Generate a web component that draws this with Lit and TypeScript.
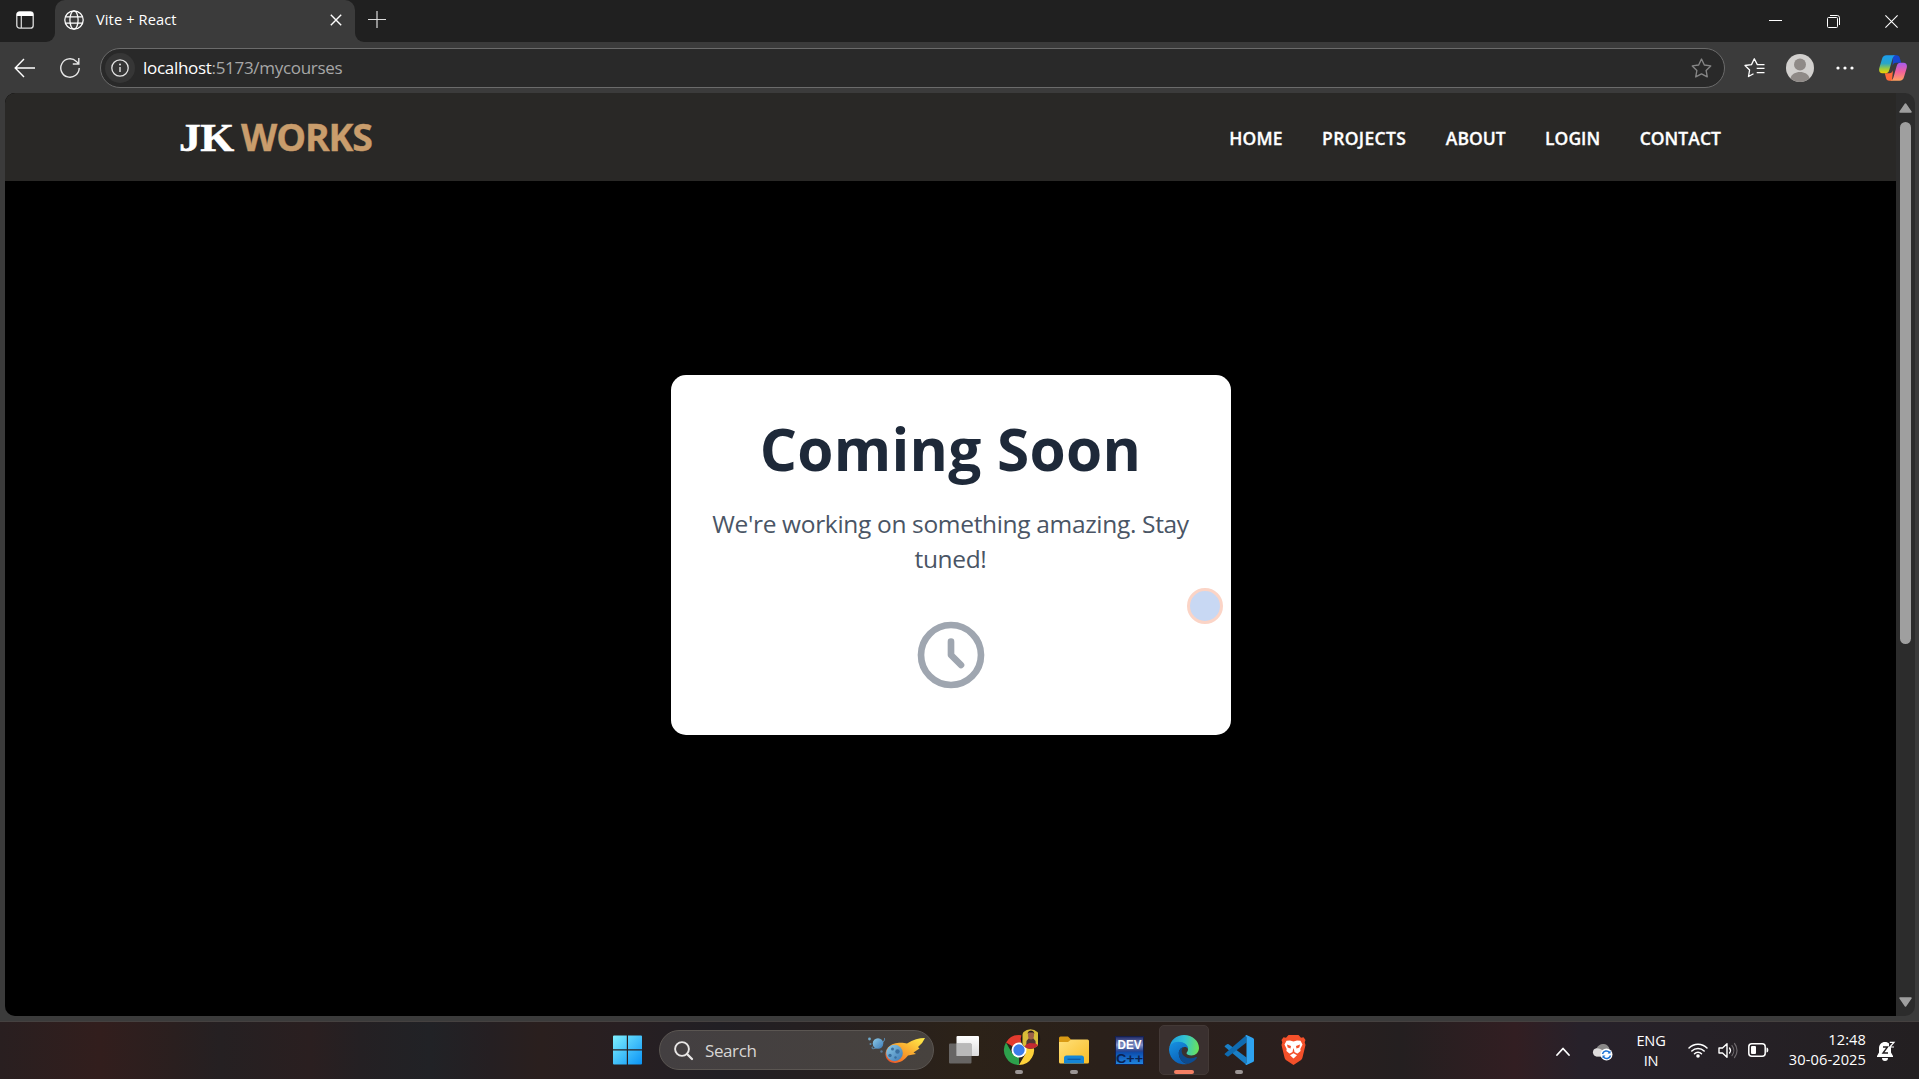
import { LitElement, html, css, svg } from "lit";
import { customElement } from "lit/decorators.js";

const icon = (w: number, h: number, body: unknown, box = `0 0 ${w} ${h}`) =>
  html`<svg width=${w} height=${h} viewBox=${box} fill="none">${body}</svg>`;

const STAR = "M10 1 12.7 6.6 18.8 7.5 14.4 11.8 15.5 18 10 15.1 4.5 18 5.6 11.8 1.2 7.5 7.3 6.6Z";

// Menu labels with their tracking in pixels.
const LINKS: [string, number][] = [["HOME", 0.1], ["PROJECTS", 0.37], ["ABOUT", 0], ["LOGIN", 0], ["CONTACT", 0.05]];

@customElement("browser-chrome")
class BrowserChrome extends LitElement {
  static styles = css`
    :host { display: block; font-family: "Open Sans", "Noto Sans", sans-serif; color: #fff; }
    svg { display: block; flex: none; }
    .tabs { height: 42px; display: flex; background: #202020; }
    .panes { width: 55px; background: #3b3b3b; }
    .panes > div { height: 42px; box-sizing: border-box; padding: 11px 0 0 16px; background: #202020; border-bottom-right-radius: 9px; }
    .tab { width: 300px; height: 42px; box-sizing: border-box; padding: 0 13px 2px 9px; display: flex; align-items: center; background: #3b3b3b; border-radius: 10px 10px 0 0; }
    .corner { background: #202020; }
    .title { flex: 1; margin-left: 12px; padding-bottom: 2px; font-size: 14.6px; letter-spacing: 0.12px; }
    .rest { flex: 1; background: #3b3b3b; }
    .rest > div { height: 42px; box-sizing: border-box; background: #202020; border-bottom-left-radius: 9px; display: flex; padding: 0 21px 0 13px; }
    .plus { padding-top: 10px; flex: 1; }
    .win { display: flex; gap: 45px; padding-top: 15px; }
    .bar { height: 51px; background: #3b3b3b; display: flex; align-items: center; box-sizing: border-box; padding: 1px 11px 0 14px; }
    .reload { margin-left: 25px; }
    .url { margin-left: 20px; width: 1625px; height: 40px; box-sizing: border-box; border: 1px solid #6b6b6b; border-radius: 20px; background: #292929; display: flex; align-items: center; padding: 0 12px 0 4px; }
    .info { width: 30px; height: 30px; border-radius: 50%; background: #363636; display: grid; place-items: center; }
    .addr { flex: 1; margin-left: 8px; padding-bottom: 2px; font-size: 17px; letter-spacing: -0.3px; color: #a7a7a7; }
    .host { color: #fff; }
    .tools { display: flex; align-items: center; flex: 1; margin-left: 19px; }
    .a { margin-left: 21px; } .b { margin-left: 22px; } .c { margin-left: 25px; }
  `;
  render() {
    return html`
      <div class="tabs">
        <div class="panes"><div>${icon(18, 18, svg`<rect x=".8" y=".8" width="16.4" height="16.4" rx="2.8" stroke="#ddd" stroke-width="1.3"/><path d="M.8 5V3.6A2.8 2.8 0 0 1 3.6.8h10.8a2.8 2.8 0 0 1 2.8 2.8V5Z" fill="#fff"/><path d="M5.3 5v12" stroke="#ddd" stroke-width="1.2"/>`)}</div></div>
        <div class="corner"><div class="tab">
          ${icon(20, 20, svg`<g stroke="#fff" stroke-width="1.25"><circle cx="10" cy="10" r="9.2"/><ellipse cx="10" cy="10" rx="4.1" ry="9.2"/><path d="M1.5 6.8h17M1.5 13.2h17"/></g>`)}
          <span class="title">Vite + React</span>
          ${icon(12, 12, svg`<path d="M.8.8 11.2 11.2M11.2.8.8 11.2" stroke="#fff" stroke-width="1.4"/>`)}
        </div></div>
        <div class="rest"><div>
          <div class="plus">${icon(18, 19, svg`<path d="M9 1v17M0 9.5h18" stroke="#ddd" stroke-width="1.2"/>`)}</div>
          <div class="win">
            ${icon(13, 13, svg`<path d="M0 5.5h13" stroke="#fff"/>`)}
            ${icon(13, 13, svg`<rect x=".5" y="2.5" width="10" height="10" rx="1" stroke="#fff"/><path d="M3 .5h7.3a2.2 2.2 0 0 1 2.2 2.2V10" stroke="#fff"/>`)}
            ${icon(13, 13, svg`<path d="m.4.400 12.200 12.200m0-12.200L.4 12.600" stroke="#fff" stroke-width="1.1"/>`)}
          </div>
        </div></div>
      </div>
      <div class="bar">
        ${icon(21, 20, svg`<path d="M21 10H1.5M10 1 1.2 10l8.8 9" stroke="#fff" stroke-width="1.4"/>`)}
        <span class="reload">${icon(20, 20, svg`<path d="M19.2 10A9.2 9.2 0 1 1 16.4 3.4L18.6 5.8M18.8 0v6h-6" stroke="#e8e8e8" stroke-width="1.4"/>`)}</span>
        <div class="url">
          <div class="info">${icon(18, 18, svg`<circle cx="9" cy="9" r="8.2" stroke="#e4e4e4" stroke-width="1.3"/><path d="M9 8v5" stroke="#e4e4e4" stroke-width="1.4"/><circle cx="9" cy="5.5" r="1" fill="#e4e4e4"/>`)}</div>
          <div class="addr"><span class="host">localhost</span>:5173/mycourses</div>
          ${icon(21, 20, svg`<path d=${STAR} stroke="#858585" stroke-width="1.3" stroke-linejoin="round"/>`, "0 0 20 19")}
        </div>
        <div class="tools">
          ${icon(21, 20, svg`<path d="M20.500 10.400H12.700M20.500 14.600H12.700M20.500 6.600H13.300L10.300.8 7.500 6.600 1 7.500l4.600 4.500-1.100 6.500 5-2.700" stroke="#fff" stroke-width="1.300" stroke-linejoin="round"/>`)}
          <span class="a">${icon(28, 28, svg`<circle cx="14" cy="14" r="14" fill="#d2d0ce"/><circle cx="14" cy="10.5" r="6" fill="#8f8a87"/><path d="M4.5 24.2c1-4.2 5-6.3 9.5-6.3s8.500 2.100 9.500 6.300A14 14 0 0 1 4.500 24.200Z" fill="#8f8a87"/>`)}</span>
          <span class="b">${icon(18, 4, svg`<g fill="#fff"><circle cx="2" cy="2" r="1.600"/><circle cx="9" cy="2" r="1.600"/><circle cx="16" cy="2" r="1.600"/></g>`)}</span>
          <span class="c">${icon(28, 26, svg`
            <defs>
              <linearGradient id="cl" x1="0" y1="0" x2="0" y2="1"><stop stop-color="#1b9df0"/><stop offset=".45" stop-color="#28a5c8"/><stop offset=".75" stop-color="#9dcb3c"/><stop offset="1" stop-color="#f5d000"/></linearGradient>
              <linearGradient id="cr" x1="0" y1="0" x2="0" y2="1"><stop stop-color="#a65bf0"/><stop offset=".5" stop-color="#f0609c"/><stop offset="1" stop-color="#ffa25e"/></linearGradient>
            </defs>
            <path d="M14 .2h3.500c2 0 2.800 1 3.300 2.700l1.400 4.800h-5c-2 0-3 1-3.600 3Z" fill="#1747d0"/>
            <path d="M13 25.800H10.300c-2 0-2.800-1-3.300-2.700l-1.200-4.800h4.500c2 0 3-1 3.700-3Z" fill="#ff6a3a"/>
            <path d="M7.500.2H17c-2 0-2.800 1.400-3.400 3.300L10.300 15c-.7 2.400-1.700 3.300-3.800 3.300H3.400C.6 18.300-.4 16 .3 13L3 4C3.800 1.400 5 .2 7.500.2Z" fill="url(#cl)"/>
            <path d="M20.500 25.800H11c2 0 2.800-1.400 3.400-3.300L17.700 11c.7-2.400 1.700-3.300 3.800-3.300h3.100c2.800 0 3.800 2.300 3.100 5.300L25 22c-.8 2.600-2 3.800-4.500 3.800Z" fill="url(#cr)"/>`)}</span>
        </div>
      </div>`;
  }
}

@customElement("site-page")
class SitePage extends LitElement {
  static styles = css`
    :host { display: flex; flex: 1; min-height: 0; margin: 0 4px 5px 5px; background: #2c2c2c; border-radius: 10px; overflow: hidden; font-family: "Open Sans", "Noto Sans", sans-serif; }
    svg { display: block; flex: none; }
    .page { width: 1891px; display: flex; flex-direction: column; background: #000; }
    .head { height: 88px; box-sizing: border-box; flex: none; background: #292826; display: flex; align-items: center; justify-content: space-between; padding: 0 175px 0 174px; }
    .logo { display: flex; align-items: baseline; font-weight: 700; white-space: nowrap; padding-bottom: 2px; }
    .jk { width: 54px; font-family: "Liberation Serif", serif; font-size: 39px; color: #fff; letter-spacing: -0.5px; transform: scaleX(1.12); transform-origin: left; -webkit-text-stroke: 0.5px #fff; }
    .works { margin-left: 8px; font-size: 37.5px; letter-spacing: -1.1px; color: #c99d6c; -webkit-text-stroke: 0.4px #c99d6c; }
    nav { display: flex; gap: 39.5px; padding-top: 2px; }
    nav a { font-size: 17.5px; font-weight: 600; color: #fff; -webkit-text-stroke: 0.3px #fff; }
    main { flex: 1; display: flex; flex-direction: column; align-items: center; padding-top: 194px; }
    .card { width: 560px; height: 360px; box-sizing: border-box; background: #fff; border-radius: 15px; padding: 38px 40px 40px; display: flex; flex-direction: column; align-items: center; text-align: center; }
    h1 { margin: 0; font-size: 58.5px; line-height: 70px; font-weight: 700; letter-spacing: 0.25px; color: #1e2939; white-space: nowrap; }
    p { margin: 23px 0 39px; font-size: 24.5px; line-height: 35px; letter-spacing: -0.33px; color: #4a5565; }
    .scroll { width: 19px; display: flex; flex-direction: column; align-items: center; padding: 10px 0 9px; }
    .thumb { width: 11px; height: 522px; margin-top: 9px; border-radius: 6px; background: #9f9f9f; }
    .space { flex: 1; }
  `;
  render() {
    return html`
      <div class="page">
        <header class="head">
          <div class="logo"><span class="jk">JK</span><span class="works">WORKS</span></div>
          <nav>${LINKS.map(([name, track]) => html`<a style="letter-spacing:${track}px">${name}</a>`)}</nav>
        </header>
        <main>
          <section class="card">
            <h1>Coming Soon</h1>
            <p>We're working on something amazing. Stay tuned!</p>
            ${icon(80, 80, svg`<path d="M12 8v4l3 3m6-3a9 9 0 1 1-18 0 9 9 0 0 1 18 0Z" stroke="#9fa6b0" stroke-width="2" stroke-linecap="round" stroke-linejoin="round"/>`, "0 0 24 24")}
          </section>
        </main>
      </div>
      <div class="scroll">
        ${icon(13, 10, svg`<path d="M6.500 1 12 9H1Z" fill="#9f9f9f" stroke="#9f9f9f" stroke-width="1.500" stroke-linejoin="round"/>`)}
        <div class="thumb"></div><div class="space"></div>
        ${icon(13, 10, svg`<path d="M6.500 9 12 1H1Z" fill="#9f9f9f" stroke="#9f9f9f" stroke-width="1.500" stroke-linejoin="round"/>`)}
      </div>`;
  }
}

@customElement("task-bar")
class TaskBar extends LitElement {
  static styles = css`
    :host { display: flex; height: 58px; box-sizing: border-box; border-top: 1px solid #454140; padding: 3px 24px 0 603px; font-family: "Open Sans", "Noto Sans", sans-serif; color: #fff;
      background: linear-gradient(90deg, #291f20 0, #321e1d 100px, #2a1f1f 175px, #252022 220px, #2a1f20 310px, #242023 360px, #212226 430px, #251f22 490px, #2a1f1e 540px, #281f22 620px, #211f24 720px, #251f20 820px, #2c2218 970px, #2a201a 1100px, #2a1f1e 1300px, #241f20 1400px, #321e22 1515px, #27212a 1580px, #262127 1700px, #231f21 1919px); }
    svg { display: block; overflow: visible; }
    .apps { display: flex; gap: 5px; flex: 1; }
    .app { width: 50px; height: 50px; box-sizing: border-box; display: grid; place-items: center; border-radius: 5px; position: relative; }
    .active { background: #3a302f; border: 1px solid #433936; }
    .dot, .line { position: absolute; bottom: 1px; left: 21px; width: 8px; height: 4px; border-radius: 2px; background: #9b9594; }
    .line { left: 14px; bottom: 0; width: 20px; background: #f47f63; }
    .search { width: 275px; height: 40px; margin: 5px 0 0 1px; box-sizing: border-box; border-radius: 20px; border: 1px solid #5b5652; background: linear-gradient(90deg, #433f41, #47423e); display: flex; align-items: center; padding: 0 8px 0 14px; }
    .search span { flex: 1; margin-left: 12px; font-size: 17px; letter-spacing: -0.4px; color: #d8d6d4; }
    .tray { display: flex; align-items: center; height: 52px; font-size: 14.6px; line-height: 20px; }
    .lang { text-align: center; width: 34px; margin: 0 20px 2px 21px; letter-spacing: -0.2px; }
    .time { text-align: right; width: 82px; margin: 0 11px 4px 15px; white-space: nowrap; letter-spacing: 0.1px; display: flex; flex-direction: column; align-items: flex-end; }
    .cloud { margin-left: 22px; }
    .g { margin-left: 10px; }
    .dev { font: 700 12px "Liberation Sans", sans-serif; fill: #fff; }
    .cpp { font: 700 12px "Liberation Sans", sans-serif; fill: #0b2250; }
  `;
  render() {
    return html`
      <div class="apps">
        <div class="app">${icon(30, 30, svg`<defs><linearGradient id="w" x1="0" y1="0" x2="1" y2="1"><stop stop-color="#7ff0ff"/><stop offset="1" stop-color="#0a93f5"/></linearGradient></defs><path d="M1.500.5H14.300V14.300H.5V1.500a1 1 0 0 1 1-1ZM15.500.5H28.500a1 1 0 0 1 1 1V14.300H15.500ZM.5 15.500H14.300V29.500H1.500a1 1 0 0 1-1-1ZM15.500 15.500H29.500v13a1 1 0 0 1-1 1H15.500Z" fill="url(#w)"/>`, "0.5 0 30 30")}</div>
        <div class="search">
          ${icon(19, 19, svg`<circle cx="8" cy="8" r="6.900" stroke="#e8e6e5" stroke-width="1.900"/><path d="m13 13 5 5" stroke="#e8e6e5" stroke-width="2.300" stroke-linecap="round"/>`)}
          <span>Search</span>
          ${icon(57, 27, svg`
            <defs><linearGradient id="f" x1="0" y1="1" x2="1" y2="0"><stop stop-color="#e9482c"/><stop offset=".4" stop-color="#f8992a"/><stop offset="1" stop-color="#fff04a"/></linearGradient>
            <linearGradient id="p" x1="0" y1="0" x2="1" y2="1"><stop stop-color="#8fcdea"/><stop offset="1" stop-color="#3b78b4"/></linearGradient></defs>
            <circle cx="1.500" cy="2" r="1.400" fill="#6fa9cc"/><circle cx="2.500" cy="7" r="1" fill="#5c8aa8"/><circle cx="13.500" cy="14.500" r="1.200" fill="#5c7890"/>
            <circle cx="10" cy="6.500" r="5.300" fill="url(#p)"/><path d="M5 9.500C2 12 6 13 11 9c4-3 7-7 5-8" stroke="#5d9ccb" stroke-width=".9"/>
            <path d="M57 1c-6 0-12 1.500-18 5.500-5-1-14-1.500-19 4-5 6-2 13.500 4 15 6 1.500 12-1.500 16-7l8-1.500-2.500-1.500 6-4-1.500-1.500Q55 6 57 1Z" fill="url(#f)"/>
            <circle cx="26.500" cy="16" r="8.300" fill="url(#p)"/><g fill="#3a6f9f"><circle cx="24.500" cy="12" r="1.500"/><circle cx="29.500" cy="14.500" r="2.200"/><circle cx="22" cy="18.500" r="1.700"/><circle cx="27.500" cy="20.500" r="1.200"/></g>`)}
        </div>
        <div class="app">${icon(30, 28, svg`<defs><linearGradient id="t" x1="0" y1="0" x2="0" y2="1"><stop stop-color="#fff"/><stop offset="1" stop-color="#dcdcdc"/></linearGradient></defs><rect x="7.500" y="0" width="22.500" height="20" rx="1" fill="url(#t)"/><rect x="0" y="7.500" width="22.500" height="20" rx="1" fill="#777" fill-opacity=".8"/><path d="M7.500 7.500h14a1 1 0 0 1 1 1V20h-15Z" fill="#b9b9b9"/>`)}</div>
        <div class="app">${icon(30, 30, svg`
          <path d="M15 15 2 7.500A15 15 0 0 1 28 7.500H15Z" fill="#e33b2e"/><path d="M15 22.500 15 30A15 15 0 0 1 2 7.500L8.500 18.700Z" fill="#2da14c"/><path d="M15 7.500H28A15 15 0 0 1 15 30l6.500-11.200Z" fill="#fdd13a"/>
          <circle cx="15" cy="15" r="7.500" fill="#fff"/><circle cx="15" cy="15" r="5.700" fill="#3b7de9"/>
          <clipPath id="av"><circle cx="26.500" cy="4" r="9.800"/></clipPath><g clip-path="url(#av)"><rect x="16" y="-6" width="21" height="20" fill="#1c1617"/><path d="M18.500-6H34V14H18.500z" fill="#d8bd38"/><path d="M22 14 22.500 6l2.500-3h4l2.500 3 .5 8Z" fill="#4e3634"/><path d="M20 14l1.500-4 4-2 6 .500 2.500 1.500v4Z" fill="#c32a31"/><ellipse cx="27" cy="0" rx="3" ry="4.500" fill="#9c6049"/><path d="M23.700-1c-.5-4 6.800-4.500 6.600 0l-1-1.500h-4.600Z" fill="#231917"/></g>`)}<i class="dot"></i></div>
        <div class="app">${icon(30, 28, svg`<defs><linearGradient id="fo" x1="0" y1="0" x2="1" y2="1"><stop stop-color="#ffe07a"/><stop offset="1" stop-color="#f8bd27"/></linearGradient></defs><path d="M0 2A1.500 1.500 0 0 1 1.500.5H9L12 3.500l-3 5H0Z" fill="#d99a14"/><path d="M0 6h9l3-2.500h16.500A1.500 1.500 0 0 1 30 5v21a1.500 1.500 0 0 1-1.500 1.500h-27A1.500 1.500 0 0 1 0 26Z" fill="url(#fo)"/><path d="M5 27.500V22a2.500 2.500 0 0 1 2.500-2.500h15A2.500 2.500 0 0 1 25 22v5.500Z" fill="#1586d6"/><path d="M8.500 23.300h13" stroke="#0c5ba5" stroke-width="1.300"/>`)}<i class="dot"></i></div>
        <div class="app">${icon(29, 29, svg`<defs><linearGradient id="d" x1="0" y1="0" x2="0" y2="1"><stop stop-color="#1c2563"/><stop offset=".3" stop-color="#8493c8"/><stop offset=".52" stop-color="#27448f"/><stop offset=".58" stop-color="#0d4eae"/><stop offset="1" stop-color="#2187e0"/></linearGradient></defs><rect x=".5" y=".5" width="28" height="28" fill="url(#d)" stroke="#14204e"/><text class="dev" x="2.500" y="13" textLength="24" lengthAdjust="spacingAndGlyphs">DEV</text><text class="cpp" x="1" y="27" textLength="27" lengthAdjust="spacingAndGlyphs">C++</text>`)}</div>
        <div class="app active">${icon(30, 30, svg`<defs>
          <linearGradient id="e1" x1="0" y1=".4" x2="1" y2=".5"><stop stop-color="#1c9be0"/><stop offset=".5" stop-color="#32c3d2"/><stop offset="1" stop-color="#6be35a"/></linearGradient>
          <linearGradient id="e2" x1="0" y1="0" x2=".5" y2="1"><stop stop-color="#1793e2"/><stop offset="1" stop-color="#0b61b8"/></linearGradient></defs>
          <path d="M.3 13C1.500 5 7.500 0 15 0c8.500 0 15 6 15 13 0 4.500-3.500 7.500-7.500 7.500-3 0-5-1-5-2.200 0-1 1.500-1.500 1.500-4C19 11 15 7.500 10 7.500 5 7.500 1.500 10 .3 13Z" fill="url(#e1)"/>
          <path d="M0 15C0 10 4 6.800 9.500 6.800c5.500 0 9.500 3.200 9.500 7-1-1.500-2.500-2-4.500-1.500C11 13 9.800 16 9.800 18.500c0 5 4.200 10.500 9.200 10.300A15 15 0 0 1 0 15Z" fill="url(#e2)"/>
          <path d="M14.500 12.300C11 13 9.800 16 9.800 18.500 9.800 24 14.500 29 19.500 28.700c3.500-1 6.500-3 8.300-5.700.4-.6-.2-1.200-.9-.9-5.900 2.700-12.400.4-13.900-4.100-.7-2.200-.2-4.500 1.500-5.700Z" fill="#0d4b8f"/>`)}<i class="line"></i></div>
        <div class="app">${icon(30, 30, svg`<path d="M.7 11 3 9.200a1.500 1.500 0 0 1 1.700 0L22.500 22.500V30L.7 11.800Z" fill="#1a7fc6"/><path d="M.7 19.500 3 21.300a1.500 1.500 0 0 0 1.700 0L22.500 7.500V0L.7 18.700Z" fill="#0f6bb0"/><path d="M21.500.3 22.500 0 29 3a1.800 1.800 0 0 1 1 1.600v20.800a1.800 1.800 0 0 1-1 1.600l-6.500 3-1-.3 1-2V2.300Z" fill="#2ea3f0"/>`)}<i class="dot"></i></div>
        <div class="app">${icon(26, 30, svg`<path d="M7.500 0h10l2.500 2.800 2.500-.5L24.500 5l-.8 2.300L24.500 10l-3 12.500c-.4 1.500-1 2.200-2.200 3L12.500 30l-6.800-4.500c-1.200-.8-1.800-1.500-2.200-3L.5 10l.8-2.700L.5 5l2-2.700 2.500.5Z" fill="#f4502a"/><path d="M12.500 6.500 16 5.500l3.500.3 2 3.700-2.200 4.500.3 2-3 2.500-1-.3-3.100-1.700-3.100 1.700-1 .3-3-2.500.3-2L3.500 9.500l2-3.700L9 5.500Z" fill="#fff"/><path d="M6 9.500 10 11 9.500 13.500 6.700 12.500ZM19 9.500 15 11l.5 2.500 2.800-1ZM12.500 13l1 3.500-1 1-1-1Z" fill="#f4502a"/><path d="m9 20.300 3.500-2 3.500 2-3.500 3.200Z" fill="#fff"/>`)}</div>
      </div>
      <div class="tray">
        ${icon(14, 9, svg`<path d="m1 8 6-6.500L13 8" stroke="#fff" stroke-width="1.800" stroke-linejoin="round" stroke-linecap="round"/>`)}
        <span class="cloud">${icon(21, 17, svg`<path d="M4.500 13.500a4.500 4.500 0 0 1 0-8C6 2 9 .5 12 1c3 .3 5 2.500 5.500 5l-3 7.500Z" fill="#8a8888"/><path d="M4.500 13.500A4.200 4.200 0 0 1 4.500 5.200c3 0 5 1 7 3l4 5.300Z" fill="#dedcdc"/><circle cx="14.500" cy="11.500" r="6" fill="#fff"/><path d="M10.500 11a4 4 0 0 1 7-1.500m1 3a4 4 0 0 1-7 1.500" stroke="#1c72d4" stroke-width="1.500"/><path d="M18.500 7.500v3h-3ZM10.500 15.500v-3h3Z" fill="#1c72d4"/>`)}</span>
        <div class="lang">ENG<br>IN</div>
        ${icon(20, 16, svg`<g stroke="#fff" stroke-width="1.500" stroke-linecap="round"><path d="M1 5a12.700 12.700 0 0 1 18 0M3.800 8a8.800 8.800 0 0 1 12.400 0M6.500 10.800a5 5 0 0 1 7 0"/></g><circle cx="10" cy="13" r="1.800" fill="#fff"/>`)}
        <span class="g">${icon(20, 16, svg`<path d="M1 5h3.500L9 .7v13.600L4.500 10H1Z" stroke="#fff" stroke-width="1.400" stroke-linejoin="round"/><path d="M11.500 5a4 4 0 0 1 0 5" stroke="#fff" stroke-width="1.300" stroke-linecap="round"/><path d="M14 2.500a8 8 0 0 1 0 10M16.500.5a11 11 0 0 1 0 14" stroke="#6d686c" stroke-width="1.200" stroke-linecap="round"/>`)}</span>
        <span class="g">${icon(21, 16, svg`<rect x=".8" y=".8" width="16.400" height="12.400" rx="3" stroke="#fff" stroke-width="1.500"/><rect x="3" y="3" width="5" height="8" rx="1" fill="#fff"/><path d="M18.500 4.500c1.300 0 1.800 1 1.800 2.500s-.5 2.500-1.800 2.500Z" fill="#fff"/>`)}</span>
        <div class="time"><span>12:48</span><span>30-06-2025</span></div>
        ${icon(18, 20, svg`<path d="M2 7.500C2 3.500 4.500 1 8 1s6 2.500 6 6.500v4l2 3.500v1H0v-1l2-3.500ZM5 17h6a3 3 0 0 1-6 0Z" fill="#fff"/><path d="M12 0H18.500V6H12Z" fill="#262125"/><path d="M6 6h4.500L6 12h5" stroke="#231f21" stroke-width="1.400"/><path d="M12.800 1.300h4.200L12.800 6H17" stroke="#fff" stroke-width="1.200"/>`)}
      </div>`;
  }
}

@customElement("app-root")
class AppRoot extends LitElement {
  static styles = css`
    :host { display: flex; flex-direction: column; width: 1919px; height: 1079px; overflow: hidden; background: #3b3b3b; position: relative; }
    .pointer { position: absolute; left: 1187px; top: 588px; width: 36px; height: 36px; box-sizing: border-box; border-radius: 50%; background: #c8d8f3; border: 3px solid #fbd4c6; }
  `;
  render() {
    return html`<browser-chrome></browser-chrome><site-page></site-page><task-bar></task-bar><div class="pointer"></div>`;
  }
}
